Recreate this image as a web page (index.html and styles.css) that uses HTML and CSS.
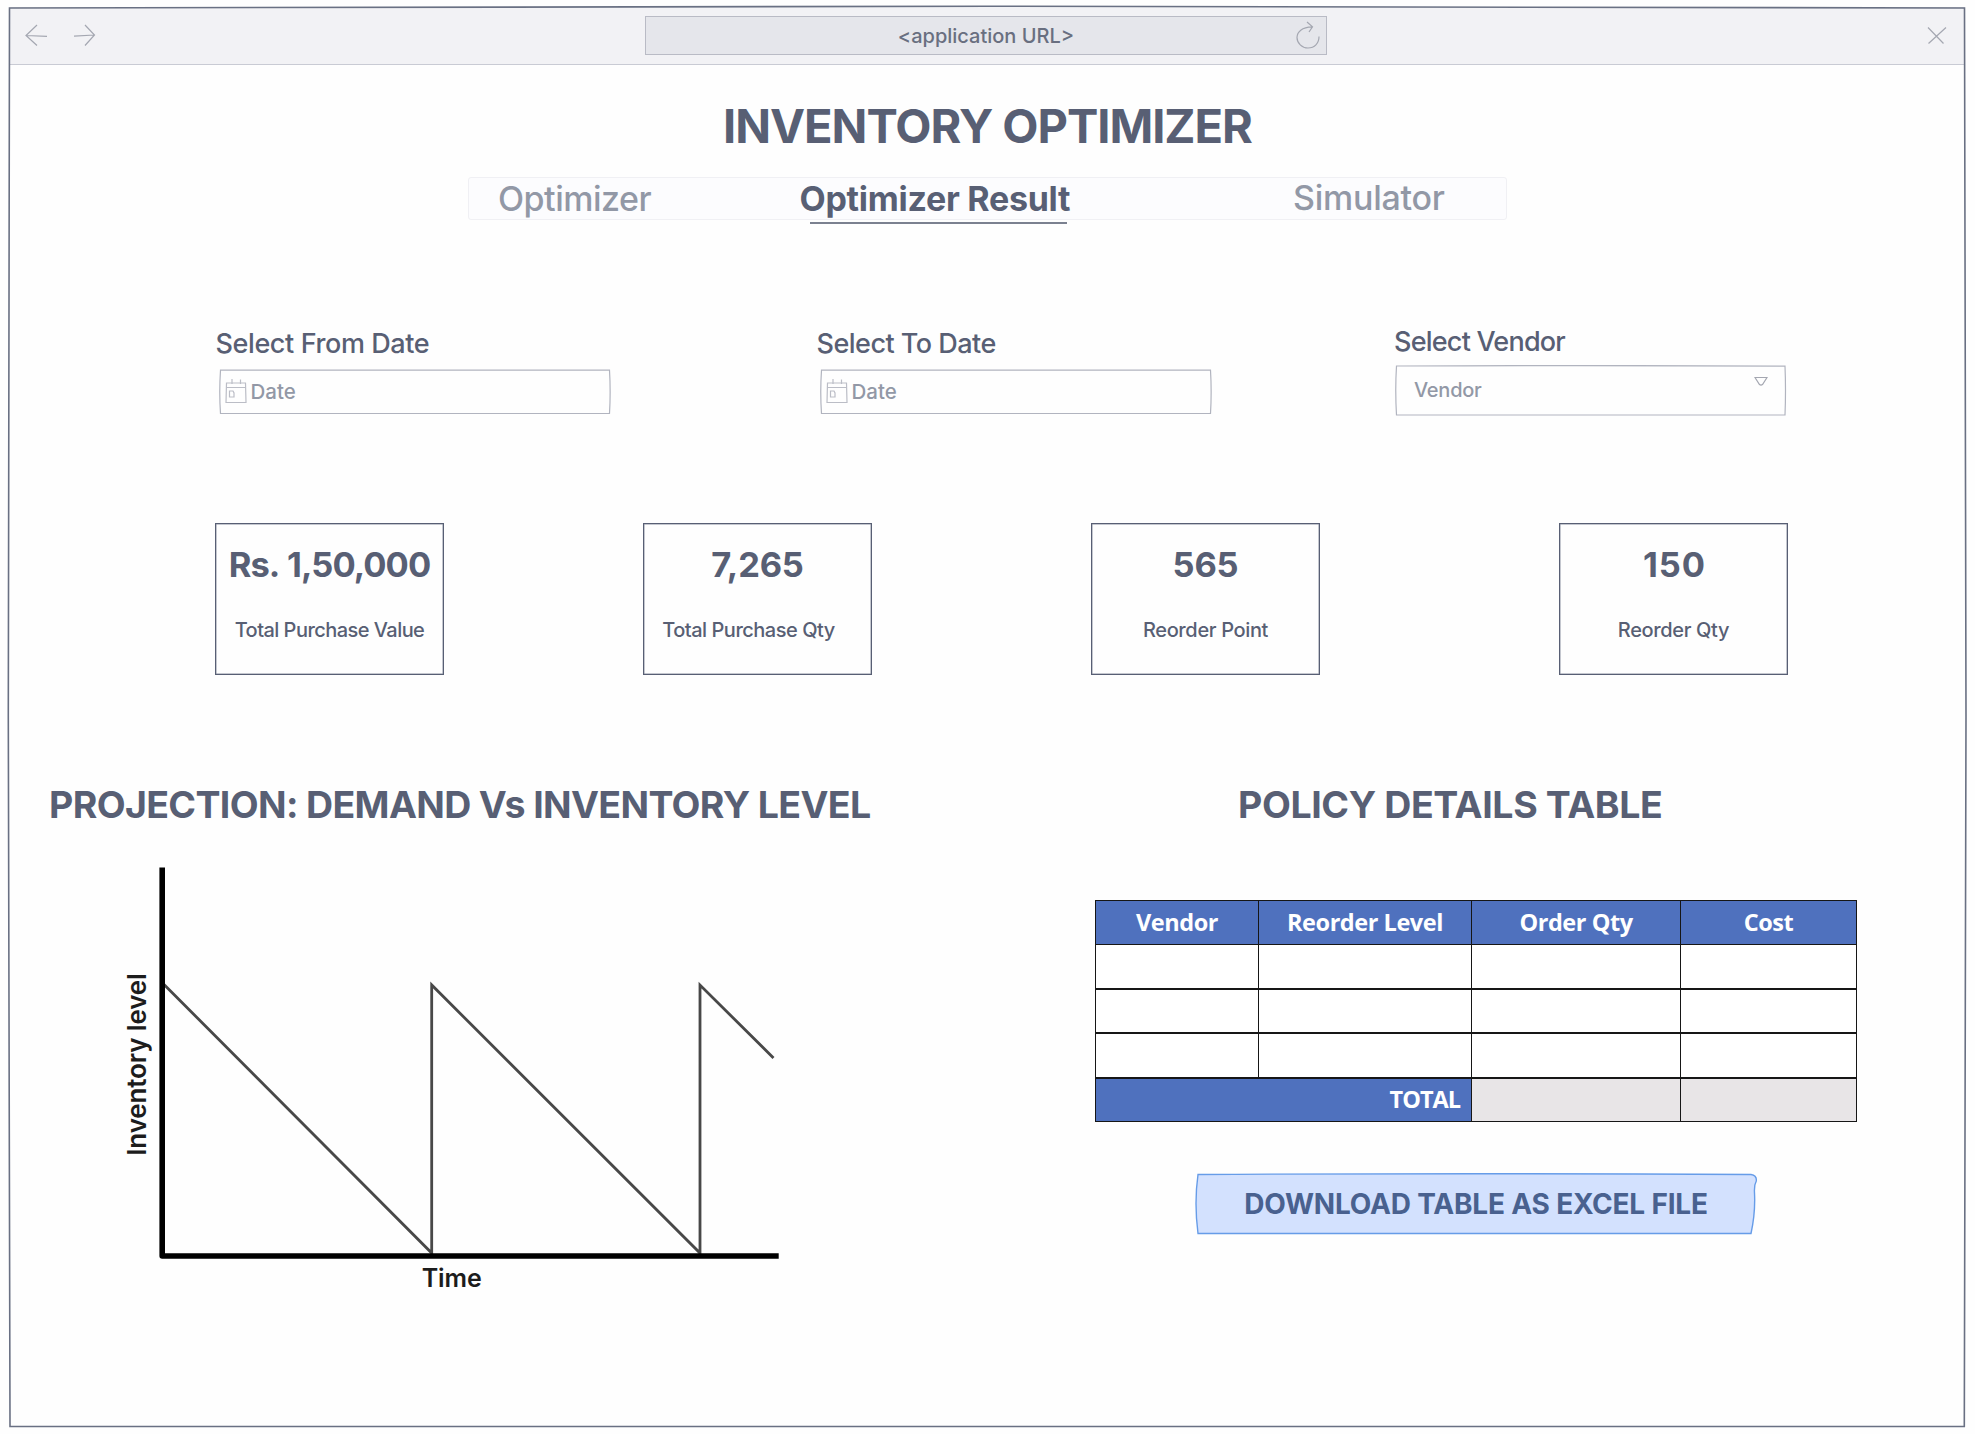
FILE: index.html
```
<!DOCTYPE html>
<html lang="en">
<head>
<meta charset="utf-8">
<title>Inventory Optimizer</title>
<link rel="stylesheet" href="styles.css">
</head>
<body>
<div class="window">
  <svg class="window-frame" viewBox="0 0 1975 1434" fill="none" aria-hidden="true">
    <path d="M9.5 8Q500 7 990 6.2Q1480 7 1964.5 8Q1965 350 1966 716Q1966 1100 1964.3 1426.5Q1400 1426.2 988 1426.500Q500 1426.2 10 1426.5Q8.5 1100 8.3 716Q8.5 350 9.5 8Z"/>
  </svg>

  <header class="toolbar">
    <nav class="history">
      <svg width="24" height="26" viewBox="0 0 24 26"><path d="M13 2L2 12.5L13 22.5M2 12.5L23 13.3"/></svg>
      <svg width="24" height="26" viewBox="0 0 24 26"><path d="M11 2L20.5 12L11 22.5M0 13.2L20.5 12"/></svg>
    </nav>
    <div class="address">
      <span>&lt;application URL&gt;</span>
      <svg class="reload" width="26" height="30" viewBox="0 0 26 30"><path d="M17 5.8C7 6 2 11 2 16.5C2 22 7 27 13 27C19.500 27 24 22.500 24 15.500M12 1L17.500 5.800L14 11"/></svg>
    </div>
    <svg class="close" width="20" height="20" viewBox="0 0 20 20"><path d="M1 1.500L16.500 17.500M19 1.500L1.500 17.500"/></svg>
  </header>

  <main class="page">
    <h1>INVENTORY OPTIMIZER</h1>

    <nav class="tabs">
      <a class="tab tab-first">Optimizer</a>
      <a class="tab tab-active">Optimizer Result</a>
      <a class="tab tab-last">Simulator</a>
    </nav>

    <section class="filters">
      <div class="field">
        <label class="label-from">Select From Date</label>
        <div class="input">
          <svg class="outline" viewBox="0 0 392 46" preserveAspectRatio="none"><path d="M1.500 1.200H390.500Q391.800 23 390.500 44.500H1.500Q0 23 1.500 1.200Z"/></svg>
          <svg class="calendar" width="22" height="26" viewBox="0 0 22 26"><path d="M1.500 5H20.500L21 24.500H1L1.500 5ZM1.500 9.500H20.500M7 1V6M15.500 1.500V6M4.500 13H8L9 15V19H4.500Z"/></svg>
          <span>Date</span>
        </div>
      </div>
      <div class="field">
        <label class="label-to">Select To Date</label>
        <div class="input">
          <svg class="outline" viewBox="0 0 392 46" preserveAspectRatio="none"><path d="M1.500 1.200H390.500Q391.800 23 390.500 44.500H1.500Q0 23 1.500 1.200Z"/></svg>
          <svg class="calendar" width="22" height="26" viewBox="0 0 22 26"><path d="M1.500 5H20.500L21 24.500H1L1.500 5ZM1.500 9.500H20.500M7 1V6M15.500 1.500V6M4.500 13H8L9 15V19H4.500Z"/></svg>
          <span>Date</span>
        </div>
      </div>
      <div class="field field-vendor">
        <label class="label-vendor">Select Vendor</label>
        <div class="input input-select">
          <svg class="outline" viewBox="0 0 392 51" preserveAspectRatio="none"><path d="M1.500 1Q200 0 390 1.200Q391 25 390 50H1.500Q0 25 1.500 1Z"/></svg>
          <span>Vendor</span>
          <svg class="caret" width="14" height="11" viewBox="0 0 14 11"><path d="M1 1.500H13L8.500 8.500Q7 9.800 5.500 8.500Z"/></svg>
        </div>
      </div>
    </section>

    <section class="metrics">
      <div class="metric metric-value"><strong>Rs. 1,50,000</strong><span>Total Purchase Value</span></div>
      <div class="metric metric-qty"><strong>7,265</strong><span>Total Purchase Qty</span></div>
      <div class="metric"><strong>565</strong><span>Reorder Point</span></div>
      <div class="metric metric-reorder"><strong>150</strong><span>Reorder Qty</span></div>
    </section>

    <section class="details">
      <div class="projection">
        <h2>PROJECTION: DEMAND Vs INVENTORY LEVEL</h2>
        <svg class="chart" width="690" height="450" viewBox="110 860 690 450">
          <path class="saw" d="M164 985.500L431.700 1254V986L700 1254V986L773.500 1059"/>
          <path class="axis" d="M162.200 868.500V1257H778.700"/>
          <text class="axis-label" x="451.700" y="1288" text-anchor="middle">Time</text>
          <text class="axis-label axis-label-y" transform="translate(146.200 1065.500) rotate(-90)" text-anchor="middle">Inventory level</text>
        </svg>
      </div>

      <div class="policy">
        <h2>POLICY DETAILS TABLE</h2>
        <table>
          <colgroup><col class="col-vendor"><col class="col-level"><col class="col-qty"><col class="col-cost"></colgroup>
          <thead><tr><th>Vendor</th><th>Reorder Level</th><th>Order Qty</th><th>Cost</th></tr></thead>
          <tbody>
            <tr><td></td><td></td><td></td><td></td></tr>
            <tr><td></td><td></td><td></td><td></td></tr>
            <tr><td></td><td></td><td></td><td></td></tr>
          </tbody>
          <tfoot><tr><th colspan="2">TOTAL</th><td></td><td></td></tr></tfoot>
        </table>
        <button class="download" type="button">
          <svg class="download-shape" viewBox="0 0 562 62"><path d="M3 1.500Q280 0 556 1.500Q562 2.500 561.300 8Q559 12 559.500 20Q560.500 40 556 60.500Q280 59.500 3 60.500Q-1 30 3 1.500Z"/></svg>
          <span>DOWNLOAD TABLE AS EXCEL FILE</span>
        </button>
      </div>
    </section>
  </main>
</div>
</body>
</html>
```

FILE: styles.css
```
* { box-sizing: border-box; }

body {
  margin: 0;
  background: #fefefe;
  color: #585f74;
  font-family: Inter, "Liberation Sans", sans-serif;
  font-weight: 450;
}

.window {
  position: relative;
  width: 1975px;
  height: 1434px;
  padding: 7px 10px 7px 9px;
  overflow: hidden;
}

.window-frame {
  position: absolute;
  inset: 0;
  width: 100%;
  height: 100%;
  stroke: #697083;
  stroke-width: 1.6;
  pointer-events: none;
}

/* Browser toolbar */
.toolbar {
  display: grid;
  grid-template-columns: 636px 682px 1fr;
  align-items: center;
  height: 58px;
  background: #f2f2f5;
  border-bottom: 1px solid #c9cbd4;
}

.toolbar svg, .input svg {
  fill: none;
  stroke: #a4a7b1;
  stroke-width: 1.2;
}

.history {
  display: flex;
  gap: 26px;
  padding-left: 15px;
}

.address {
  display: flex;
  align-items: center;
  justify-content: center;
  position: relative;
  height: 39px;
  background: #e5e6eb;
  border: 1px solid #b9bbc5;
  color: #696f80;
  font-size: 20px;
}

.address span { padding-top: 1px; }
.reload { position: absolute; right: 5px; top: 4px; }
.close { justify-self: end; margin-right: 18px; }

/* Heading and tabs */
.page { padding-top: 37px; }

h1, h2 { margin: 0; line-height: 48px; font-weight: 700; white-space: nowrap; }

h1 {
  padding-left: 1px;
  font-size: 47px;
  letter-spacing: -1.03px;
  text-align: center;
}

.tabs {
  display: grid;
  grid-template-columns: 301.500px 493.500px 1fr;
  width: 1039px;
  height: 43px;
  margin: 27px 0 0 459px;
  padding-left: 29px;
  background: #fcfcfe;
  border: 1px solid #f0f0f4;
  border-radius: 3px;
}

.tab {
  color: #9298a6;
  font-size: 34px;
  line-height: 42px;
  white-space: nowrap;
}

.tab-first { letter-spacing: -0.5px; }
.tab-last { line-height: 40px; letter-spacing: -0.25px; }

.tab-active {
  position: relative;
  color: #585f74;
  font-weight: 700;
  letter-spacing: -0.27px;
}

.tab-active::after {
  content: "";
  position: absolute;
  left: 10px;
  top: 44px;
  width: 257px;
  height: 2px;
  background: #7b8190;
}

/* Filters */
.filters {
  display: grid;
  grid-template-columns: 601px 577.5px 396px;
  height: 91px;
  margin: 105px 0 0 206.500px;
}

.field { padding-top: 1.5px; }
.field-vendor { padding-top: 0; }

.field label {
  display: block;
  font-size: 27px;
  line-height: 34px;
}

.label-from { letter-spacing: -0.4px; }
.label-to { letter-spacing: -0.52px; }
.label-vendor { letter-spacing: -0.78px; }

.input {
  display: flex;
  align-items: center;
  position: relative;
  width: 392px;
  height: 46px;
  margin: 8.500px 0 0 3px;
  padding: 0 0 1px 6px;
  color: #9298a6;
  font-size: 20.500px;
}

.input-select {
  height: 51px;
  margin: 6px 0 0 1px;
  padding: 0 19px 1px 19px;
  font-size: 20px;
  letter-spacing: -0.250px;
}

.input .outline {
  position: absolute;
  inset: 0;
  width: 100%;
  height: 100%;
  stroke: #b1b4bf;
}

.calendar { margin: -2px 4px 0 0; }
.input .calendar { stroke: #bbbdc6; }
.caret { align-self: flex-start; margin: 11px 0 0 auto; }

/* Metric cards */
.metrics {
  display: grid;
  grid-template-columns: 428px 448px 468px 229px;
  margin: 106.500px 0 0 206px;
}

.metric {
  display: flex;
  flex-direction: column;
  align-items: center;
  width: 229px;
  height: 152px;
  padding-top: 21px;
  border: 1px solid #585f74;
  box-shadow: inset 0 0 0 0.5px #8a90a0;
  white-space: nowrap;
}

.metric strong { font-size: 34.500px; line-height: 40px; letter-spacing: -0.200px; }
.metric span { margin-top: 30px; font-size: 20px; line-height: 30px; letter-spacing: -0.350px; }
.metric-value strong { letter-spacing: -0.950px; word-spacing: 1.500px; }
.metric-value span { letter-spacing: -0.540px; }
.metric-qty span { padding-right: 18px; letter-spacing: -0.480px; }
.metric-reorder strong { padding-left: 2px; letter-spacing: 0.900px; }

/* Projection chart and policy table */
.details {
  display: grid;
  grid-template-columns: 1086px 761px;
  margin-top: 106px;
}

h2 { font-size: 37.500px; }

.projection h2 { padding-left: 40px; letter-spacing: -0.640px; }
.chart { display: block; margin: 30px 0 0 101px; }
.axis { fill: none; stroke: #000; stroke-width: 5.600; stroke-linejoin: round; }
.saw { fill: none; stroke: #484848; stroke-width: 2.800; }
.axis-label { fill: #1c1c1c; font-size: 25px; font-weight: 600; letter-spacing: -0.050px; }
.axis-label-y { font-size: 26px; letter-spacing: -0.150px; }

.policy h2 { padding-left: 143px; letter-spacing: -0.390px; }

table {
  width: 761px;
  margin-top: 71px;
  border-collapse: collapse;
  table-layout: fixed;
  background: #fff;
}

.col-vendor { width: 163px; }
.col-level { width: 213px; }
.col-qty { width: 209px; }
.col-cost { width: 176px; }

tr { height: 44.400px; }
th, td { padding: 0; border: 1px solid #161616; }
tbody td { border-bottom-width: 2px; }

th {
  background: #4f71be;
  color: #fff;
  font-family: "Open Sans", sans-serif;
  font-size: 23.500px;
  font-weight: 700;
  line-height: 30px;
  letter-spacing: -0.450px;
}

tfoot th { padding: 0 11px 2px 0; text-align: right; letter-spacing: -1px; }
tfoot td { background: #e8e5e7; }

.download {
  display: flex;
  align-items: center;
  justify-content: center;
  position: relative;
  width: 562px;
  height: 62px;
  margin: 50.500px 0 0 100px;
  padding: 0;
  border: 0;
  background: none;
  color: #49618f;
  font: 700 28px Inter, "Liberation Sans", sans-serif;
  letter-spacing: -0.180px;
  white-space: nowrap;
}

.download span { position: relative; }

.download-shape {
  position: absolute;
  inset: 0;
  overflow: visible;
  fill: #d3e1fe;
  stroke: #669ce8;
  stroke-width: 1.400;
}
```
